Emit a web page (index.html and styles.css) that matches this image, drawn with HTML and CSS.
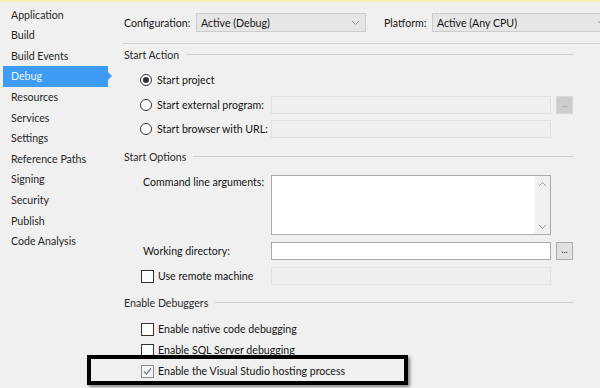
FILE: index.html
```html
<!DOCTYPE html>
<html lang="en">

<head>
    <meta charset="UTF-8">
    <title>Project Properties - Debug</title>
    <link rel="stylesheet" href="styles.css">
</head>

<body>
    <div class="page">
        <nav class="side">
            <div class="side-item">Application</div>
            <div class="side-item">Build</div>
            <div class="side-item">Build Events</div>
            <div class="side-item active">Debug</div>
            <div class="side-item">Resources</div>
            <div class="side-item">Services</div>
            <div class="side-item">Settings</div>
            <div class="side-item">Reference Paths</div>
            <div class="side-item">Signing</div>
            <div class="side-item">Security</div>
            <div class="side-item">Publish</div>
            <div class="side-item">Code Analysis</div>
        </nav>

        <main class="main">
            <div class="config-row">
                <span class="config-label">Configuration:</span>
                <div class="select select-config">
                    <span>Active (Debug)</span>
                    <svg class="chev" width="9" height="6" viewBox="0 0 9 6"><polyline points="1,1 4.5,4.5 8,1" /></svg>
                </div>
                <span class="config-label platform-label">Platform:</span>
                <div class="select select-platform">
                    <span>Active (Any CPU)</span>
                    <svg class="chev" width="9" height="6" viewBox="0 0 9 6"><polyline points="1,1 4.5,4.5 8,1" /></svg>
                </div>
            </div>
            <div class="rule"></div>

            <div class="group-head">Start Action</div>
            <div class="form form-action">
                <label class="opt"><span class="radio checked"></span>Start project</label>
                <span></span>
                <span></span>

                <label class="opt"><span class="radio"></span>Start external program:</label>
                <div class="field disabled"></div>
                <div class="dots disabled">...</div>

                <label class="opt"><span class="radio"></span>Start browser with URL:</label>
                <div class="field disabled"></div>
                <span></span>
            </div>

            <div class="group-head">Start Options</div>
            <div class="form form-options">
                <span class="field-label top">Command line arguments:</span>
                <div class="textarea">
                    <div class="scroll">
                        <svg width="9" height="6" viewBox="0 0 9 6"><polyline points="1,5 4.5,1.5 8,5" /></svg>
                        <svg width="9" height="6" viewBox="0 0 9 6"><polyline points="1,1 4.5,4.5 8,1" /></svg>
                    </div>
                </div>
                <span></span>

                <span class="field-label">Working directory:</span>
                <div class="field"></div>
                <div class="dots">...</div>

                <label class="opt check-opt"><span class="check"></span>Use remote machine</label>
                <div class="field disabled"></div>
                <span></span>
            </div>

            <div class="group-head">Enable Debuggers</div>
            <div class="debuggers">
                <label class="opt check-opt"><span class="check"></span>Enable native code debugging</label>
                <label class="opt check-opt"><span class="check"></span>Enable SQL Server debugging</label>
                <label class="opt check-opt"><span class="check checked">
                    <svg width="11" height="11" viewBox="0 0 11 11"><polyline points="2,5.5 4.5,8 9,2.5" /></svg>
                </span>Enable the Visual Studio hosting process</label>
            </div>
        </main>
    </div>

    <!-- annotation drawn over the screenshot -->
    <div class="callout"></div>
</body>

</html>
```

FILE: styles.css
```css
html,
body {
    margin: 0;
    height: 100%;
}

body {
    font-family: "Segoe UI", Lato, "Noto Sans", sans-serif;
    font-size: 10.6px;
    color: #141414;
    background-color: #f0f0f0;
    border-top: 2px solid #fbf0b4;
    box-sizing: border-box;
    overflow: hidden;
    position: relative;
}

.page {
    display: flex;
}

/* left tab list */

.side {
    width: 123px;
    flex: none;
    padding-top: 2.7px;
}

.side-item {
    height: 20.6px;
    line-height: 20.6px;
    padding-left: 11px;
    color: #262626;
    white-space: nowrap;
}

.side-item.active {
    position: relative;
    margin-left: 3px;
    margin-right: 15px;
    padding-left: 8px;
    background-color: #3d9bf3;
    color: #eaf4ff;
}

.side-item.active::after {
    content: "";
    position: absolute;
    right: -4px;
    top: 6px;
    border-top: 4px solid transparent;
    border-bottom: 4px solid transparent;
    border-left: 4px solid #3d9bf3;
}

/* right side */

.main {
    flex: 1;
    min-width: 0;
}

.config-row {
    display: flex;
    align-items: center;
    margin-top: 11px;
    height: 19px;
}

.config-label {
    width: 73px;
    padding-left: 1px;
    box-sizing: border-box;
    flex: none;
    white-space: nowrap;
}

.platform-label {
    width: 48px;
    margin-left: 18px;
    padding-left: 0;
}

.select {
    flex: none;
    height: 19px;
    box-sizing: border-box;
    border: 1px solid #cccccc;
    background-color: #e6e6e6;
    display: flex;
    align-items: center;
    justify-content: space-between;
    padding: 0 5px 0 4px;
}

.select-config {
    width: 170px;
}

.select-platform {
    width: 180px;
}

.chev polyline,
.scroll polyline {
    fill: none;
    stroke: #9a9a9a;
    stroke-width: 1;
}

.rule {
    height: 1px;
    background-color: #d2d2d2;
    margin-top: 11px;
}

.group-head {
    display: flex;
    align-items: center;
    gap: 7px;
    height: 16px;
    line-height: 16px;
    margin-top: 3px;
    margin-right: 26px;
    padding-left: 1px;
    color: #2a2a2a;
}

.group-head::after {
    content: "";
    flex: 1;
    height: 1px;
    background-color: #cdcdcd;
    margin-top: -2px;
}

.form {
    display: grid;
    grid-template-columns: 143px 280px 17px;
    column-gap: 5px;
    align-items: center;
}

.form-action {
    row-gap: 6.5px;
    margin-top: 8px;
    margin-bottom: 11px;
    grid-auto-rows: 18px;
}

.form-options {
    row-gap: 7px;
    margin-top: 10px;
    margin-bottom: 10px;
}

.opt {
    display: flex;
    align-items: center;
    padding-left: 17px;
    white-space: nowrap;
    height: 18px;
}

.check-opt {
    padding-left: 18px;
}

.field-label {
    padding-left: 20px;
    white-space: nowrap;
}

.field-label.top {
    align-self: start;
    line-height: 16px;
    margin-top: -1px;
}

.radio {
    flex: none;
    width: 12px;
    height: 12px;
    box-sizing: border-box;
    border: 1px solid #333333;
    border-radius: 50%;
    background-color: #ffffff;
    margin-right: 5px;
    display: flex;
    align-items: center;
    justify-content: center;
}

.radio.checked::before {
    content: "";
    width: 6px;
    height: 6px;
    border-radius: 50%;
    background-color: #333333;
}

.check {
    flex: none;
    width: 13px;
    height: 13px;
    box-sizing: border-box;
    border: 1px solid #333333;
    background-color: #ffffff;
    margin-right: 4px;
    display: flex;
    align-items: center;
    justify-content: center;
}

.check.checked {
    border-color: #8a8a8a;
    background-color: #f4f4f4;
}

.check svg polyline {
    fill: none;
    stroke: #7a7a7a;
    stroke-width: 1.2;
}

.field {
    height: 18px;
    box-sizing: border-box;
    border: 1px solid #a9a9a9;
    background-color: #ffffff;
}

.field.disabled {
    border-color: #e2e2e2;
    background-color: #efefef;
}

.textarea {
    height: 60px;
    box-sizing: border-box;
    border: 1px solid #a9a9a9;
    background-color: #ffffff;
    display: flex;
    justify-content: flex-end;
}

.scroll {
    width: 15px;
    background-color: #f0f0f0;
    display: flex;
    flex-direction: column;
    justify-content: space-between;
    align-items: center;
    padding: 5px 0 4px;
}

.dots {
    height: 18px;
    box-sizing: border-box;
    border: 1px solid #adadad;
    background-color: #e1e1e1;
    font-size: 9px;
    line-height: 14px;
    text-align: center;
    color: #333333;
}

.dots.disabled {
    border-color: #d6d6d6;
    background-color: #cccccc;
    color: #a0a0a0;
}

.debuggers {
    display: flex;
    flex-direction: column;
    gap: 3px;
    margin-top: 9px;
}

/* black highlight box */

.callout {
    position: absolute;
    left: 87px;
    top: 353px;
    width: 321px;
    height: 30px;
    box-sizing: border-box;
    border: 4px solid #000000;
    box-shadow: 2px 2px 3px rgba(0, 0, 0, 0.45);
}
```
